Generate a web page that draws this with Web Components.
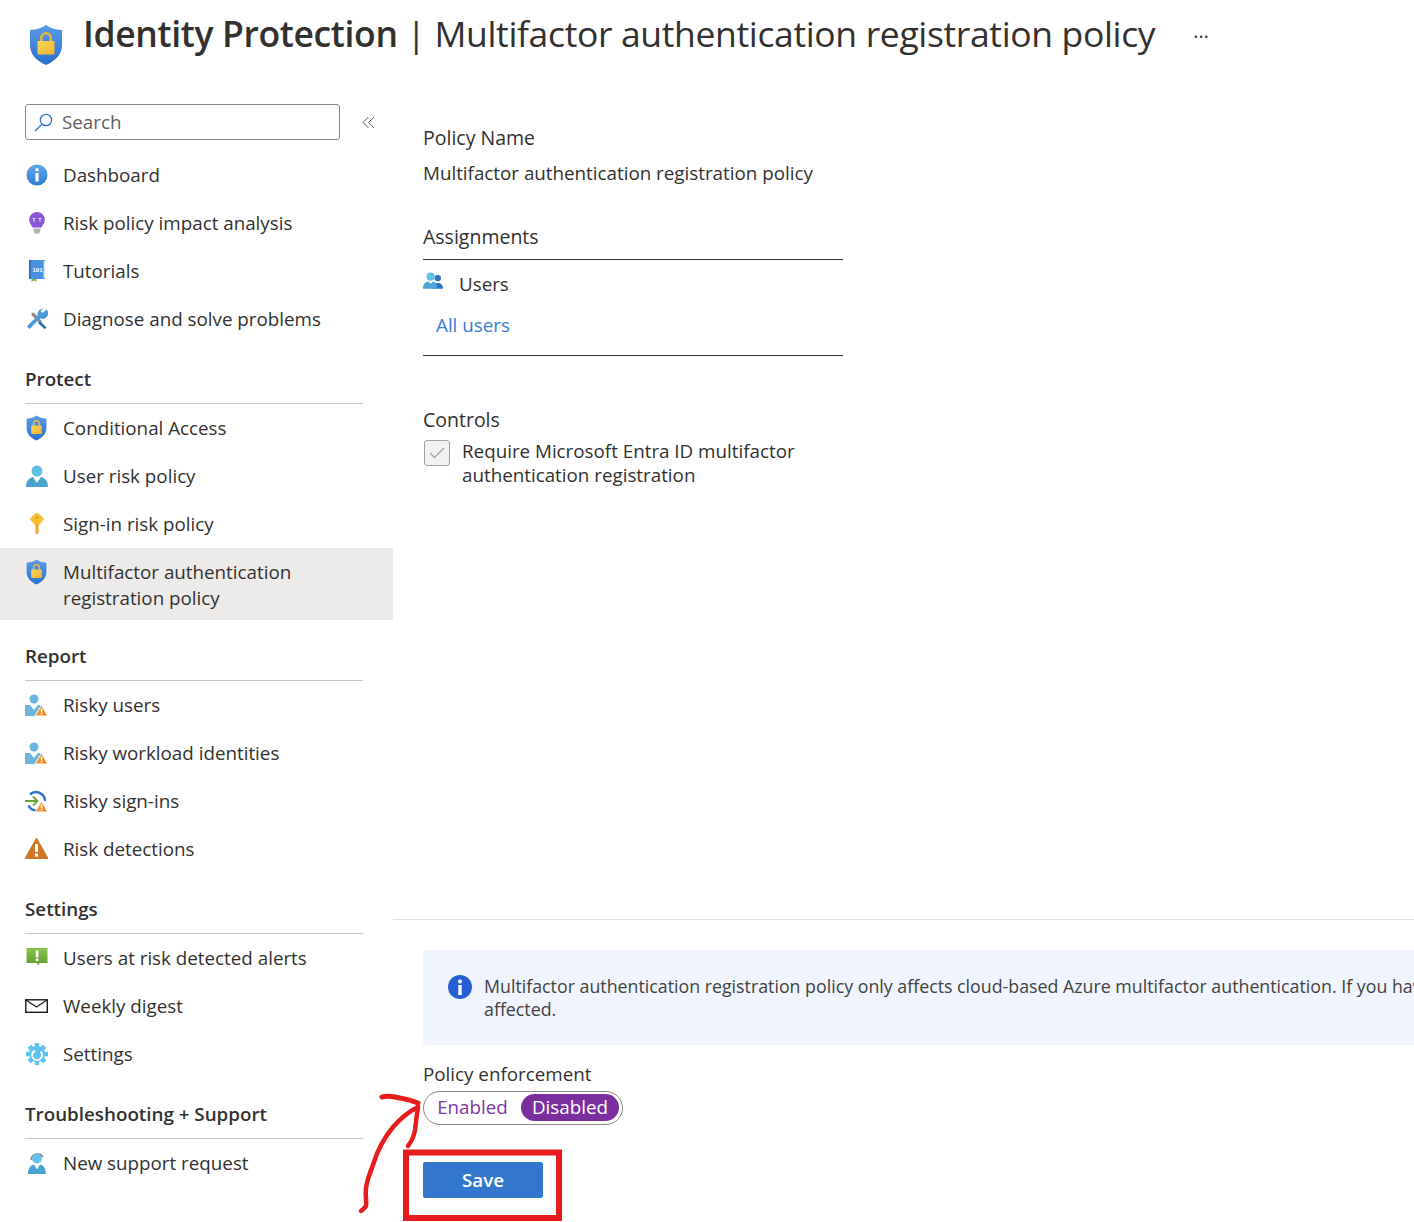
<!DOCTYPE html>
<html lang="en">
<head>
<meta charset="utf-8">
<title>Identity Protection</title>
<style>
    html, body { margin: 0; padding: 0; height: 1222px; overflow: hidden; background: white; }
    body { font-family: "Open Sans", "Noto Sans", sans-serif; color: #323130; }
</style>
</head>
<body>
<ip-app>
    <ip-header slot="header" first="Identity Protection" second="Multifactor authentication registration policy"></ip-header>
    <ip-nav slot="nav">
        <ip-nav-item icon="info">Dashboard</ip-nav-item>
        <ip-nav-item icon="bulb">Risk policy impact analysis</ip-nav-item>
        <ip-nav-item icon="book">Tutorials</ip-nav-item>
        <ip-nav-item icon="tools">Diagnose and solve problems</ip-nav-item>
        <ip-nav-heading>Protect</ip-nav-heading>
        <ip-nav-item icon="shield">Conditional Access</ip-nav-item>
        <ip-nav-item icon="user">User risk policy</ip-nav-item>
        <ip-nav-item icon="key">Sign-in risk policy</ip-nav-item>
        <ip-nav-item icon="shield" selected>Multifactor authentication registration policy</ip-nav-item>
        <ip-nav-heading>Report</ip-nav-heading>
        <ip-nav-item icon="riskyuser">Risky users</ip-nav-item>
        <ip-nav-item icon="riskyuser">Risky workload identities</ip-nav-item>
        <ip-nav-item icon="signin">Risky sign-ins</ip-nav-item>
        <ip-nav-item icon="warning">Risk detections</ip-nav-item>
        <ip-nav-heading>Settings</ip-nav-heading>
        <ip-nav-item icon="alert">Users at risk detected alerts</ip-nav-item>
        <ip-nav-item icon="mail">Weekly digest</ip-nav-item>
        <ip-nav-item icon="gear">Settings</ip-nav-item>
        <ip-nav-heading>Troubleshooting + Support</ip-nav-heading>
        <ip-nav-item icon="support">New support request</ip-nav-item>
    </ip-nav>
    <ip-policy-form slot="main"></ip-policy-form>
    <ip-policy-footer slot="footer"></ip-policy-footer>
    <ip-annotation></ip-annotation>
</ip-app>

<script>
(() => {
    const SHIELD = `
        <svg viewBox="0 0 36 42" width="100%" height="100%">
            <defs><linearGradient id="s" x1="0" y1="0" x2="0" y2="1"><stop offset="0" stop-color="#5b9be6"/><stop offset="1" stop-color="#2a6fd0"/></linearGradient>
            <linearGradient id="l" x1="0" y1="0" x2="1" y2="1"><stop offset="0" stop-color="#f9d65c"/><stop offset="1" stop-color="#f0b429"/></linearGradient></defs>
            <path d="M18 1c4 3 9 4.500 16 5v15c0 10-7 16-16 20C9 37 2 31 2 21V6c7-.5 12-2 16-5z" fill="url(#s)"/>
            <path d="M12 18v-4a6 6 0 0 1 12 0v4h-2.500v-4a3.500 3.500 0 0 0-7 0v4z" fill="#e8b63a"/>
            <rect x="9.500" y="17" width="17" height="13.500" rx="1" fill="url(#l)"/>
        </svg>`

    const PERSON = `
        <circle cx="11" cy="6" r="5.500" fill="#5fc0e6"/>
        <path d="M0 22c0-6 3-9 7-10l4 6 4-6c4 1 7 4 7 10z" fill="#4aa3cf"/>
        <path d="M9.500 12h3L11 15.500z" fill="#fff"/>`

    const RISK_BADGE = `
        <path d="M16.500 11L23 22H10z" fill="#f0913a" stroke="#fff" stroke-width="1"/>
        <rect x="15.800" y="14.500" width="1.400" height="3.800" fill="#fff"/>
        <rect x="15.800" y="19" width="1.400" height="1.400" fill="#fff"/>`

    const ICONS = {
        shield: SHIELD,
        info: `<svg viewBox="0 0 22 22" width="22" height="22">
            <defs><linearGradient id="g" x1="0" y1="0" x2="0" y2="1"><stop offset="0" stop-color="#5ea7ec"/><stop offset="1" stop-color="#2f7fd3"/></linearGradient></defs>
            <circle cx="11" cy="11" r="10.500" fill="url(#g)"/><circle cx="11" cy="5.800" r="1.800" fill="#fff"/><rect x="9.400" y="9" width="3.200" height="8.500" fill="#fff"/></svg>`,
        bulb: `<svg viewBox="0 0 22 22" width="22" height="22">
            <path d="M11 0a7.800 7.800 0 0 0-7.800 8c0 3.200 2.300 5 3.300 7.500h9c1-2.500 3.300-4.300 3.300-7.500A7.800 7.800 0 0 0 11 0z" fill="#8a56d8"/>
            <path d="M8 10V6M14 10V6M6.500 6.500h3M12.500 6.500h3" stroke="#e3d6f7" stroke-width="1" fill="none"/>
            <path d="M7.500 16.500h7v2.500l-1.500 2.500H9L7.500 19z" fill="#b3b1af"/></svg>`,
        book: `<svg viewBox="0 0 22 22" width="22" height="22">
            <rect x="3" y="0" width="16" height="19" fill="#4a90e2"/><rect x="17.500" y="1" width="1.500" height="17" fill="#d7e6f7"/>
            <rect x="3" y="0" width="2" height="19" fill="#2f72c4"/>
            <text x="11.500" y="11.500" font-size="6" font-weight="700" fill="#fff" text-anchor="middle" font-family="Liberation Sans, sans-serif">101</text>
            <path d="M5.500 19h5v3l-2.500-1.500L5.500 22z" fill="#7fba42"/></svg>`,
        tools: `<svg viewBox="0 0 22 22" width="22" height="22">
            <path d="M2 1l3 0 10 11-2.500 2.500L2 4z" fill="#8a8886" transform="translate(4 4) scale(.8)"/>
            <path d="M14 13l6.500 6.500-1.800 1.800L12 15z" fill="#1f6fb5"/>
            <path d="M20.500 1.500l-3.500 3.200-1.800-.4-.4-1.800L18.200.8a5.500 5.500 0 0 0-6.500 7L.8 18.200l2.800 2.800L14.200 10.300a5.500 5.500 0 0 0 6.300-8.800z" fill="#4a9bd8" transform="translate(0 0)"/></svg>`,
        user: `<svg viewBox="0 0 22 22" width="22" height="22">${PERSON}</svg>`,
        key: `<svg viewBox="0 0 22 22" width="22" height="22">
            <path d="M11 0l6.500 6-6.500 7-6.500-7z" fill="#f7c335" stroke="#f7c335" stroke-width="1.500" stroke-linejoin="round"/>
            <circle cx="11" cy="4.500" r="1.300" fill="#d89a1f"/>
            <path d="M9.500 11h3v9l-1.500 1.800L9.500 20z" fill="#f2a52a"/></svg>`,
        riskyuser: `<svg viewBox="0 0 23 23" width="23" height="23">
            <circle cx="9" cy="5" r="4.500" fill="#6db5dc"/>
            <path d="M0 11h5l4 5 4-5h3v11H0z" fill="#6db5dc"/>${RISK_BADGE}</svg>`,
        signin: `<svg viewBox="0 0 23 23" width="23" height="23">
            <path d="M5 4.500a9 9 0 0 1 15 6.500M3.500 15.500a9 9 0 0 0 8.500 5" fill="none" stroke="#2b74c9" stroke-width="2.500"/>
            <path d="M0 11h12M8 6.500l4.500 4.500L8 15.500" fill="none" stroke="#6aa634" stroke-width="1.800"/>${RISK_BADGE}</svg>`,
        warning: `<svg viewBox="0 0 23 22" width="23" height="22">
            <path d="M11.500 0L23 20.500H0z" fill="#cf7729" stroke="#cf7729" stroke-linejoin="round"/>
            <rect x="10" y="6" width="3" height="8" fill="#fff"/><rect x="10" y="15.500" width="3" height="3" fill="#fff"/></svg>`,
        alert: `<svg viewBox="0 0 22 22" width="22" height="22">
            <defs><linearGradient id="a" x1="0" y1="0" x2="0" y2="1"><stop offset="0" stop-color="#8bc34a"/><stop offset="1" stop-color="#5e9c2e"/></linearGradient></defs>
            <path d="M.5 1h21v15h-8l-1.500 2.500-1-2.500H.5z" fill="url(#a)"/>
            <rect x="9.800" y="3.500" width="2.600" height="7" fill="#fff"/><rect x="9.800" y="11.500" width="2.600" height="2.600" fill="#fff"/></svg>`,
        mail: `<svg viewBox="0 0 23 16" width="23" height="16">
            <rect x=".8" y="1.800" width="21.500" height="12.500" fill="#fff" stroke="#1b1a19" stroke-width="1.400"/>
            <path d="M1 2l10.500 7L22 2" fill="none" stroke="#1b1a19" stroke-width="1.200"/></svg>`,
        gear: `<svg viewBox="0 0 22 22" width="22" height="22">
            <g fill="#5ec4ee"><circle cx="11" cy="11" r="8"/>
            <rect x="8.800" y="0" width="4.400" height="22" rx=".5"/><rect x="8.800" y="0" width="4.400" height="22" rx=".5" transform="rotate(45 11 11)"/>
            <rect x="8.800" y="0" width="4.400" height="22" rx=".5" transform="rotate(90 11 11)"/><rect x="8.800" y="0" width="4.400" height="22" rx=".5" transform="rotate(135 11 11)"/></g>
            <path d="M7.500 8.500a5 5 0 1 0 7 0" fill="none" stroke="#fff" stroke-width="1.800"/><path d="M7.500 6.500l2.500 2.500-3.200.8z" fill="#fff"/></svg>`,
        support: `<svg viewBox="0 0 22 22" width="22" height="22">
            <path d="M5 8a6.500 6.500 0 0 1 12-3" fill="none" stroke="#797775" stroke-width="1.200"/>
            <circle cx="11" cy="6.500" r="5" fill="#63c1e8"/>
            <path d="M2 22c0-6 2.500-8.500 6-9.500l3 5 3-5c3.500 1 6 3.500 6 9.500z" fill="#49a5d3"/>
            <path d="M9.500 12.500h3L11 15z" fill="#fff"/></svg>`,
        users: `<svg viewBox="0 0 22 18" width="22" height="18">
            <circle cx="15.500" cy="6" r="3.300" fill="#2f6fc6"/><path d="M10 17c0-4 2.500-6 5.500-6s5.500 2 5.500 6z" fill="#2f6fc6"/>
            <circle cx="8" cy="4.500" r="4.300" fill="#63c1e8"/><path d="M0 17c0-5 2.500-7 5.500-7.500L8 12l2.500-2.500c3 .5 4.500 2.500 4.500 7.500z" fill="#49a5d3"/></svg>`
    }

    customElements.define("ip-icon", class extends HTMLElement {
        constructor(){
            super()
            this.root = this.attachShadow({mode: 'open'})
        }
        connectedCallback(){
            this.root.innerHTML = `
                <style>
                    :host { display: flex; width: 100%; height: 100%; justify-content: center; align-items: center; }
                    svg { display: block; }
                </style>
                ${ICONS[this.getAttribute("name")] || ""}`
        }
    })

    customElements.define("ip-app", class extends HTMLElement {
        constructor(){
            super()
            this.attachShadow({mode: 'open'}).innerHTML = `
                <style>
                    :host { display: block; position: relative; width: 1414px; height: 1222px; overflow: hidden; }
                    .body { display: grid; grid-template-columns: 393px 1fr; height: 1118px; }
                    .right { display: flex; flex-direction: column; min-width: 0; }
                    .main { height: 815px; border-bottom: 1px solid #e1dfdd; }
                </style>
                <slot name="header"></slot>
                <div class="body">
                    <slot name="nav"></slot>
                    <div class="right">
                        <div class="main"><slot name="main"></slot></div>
                        <slot name="footer"></slot>
                    </div>
                </div>
                <slot></slot>`
        }
    })

    customElements.define("ip-header", class extends HTMLElement {
        constructor(){
            super()
            this.attachShadow({mode: 'open'})
        }
        connectedCallback(){
            this.shadowRoot.innerHTML = `
                <style>
                    :host { display: flex; height: 104px; box-sizing: border-box; padding: 0 0 0 28px; }
                    .logo { width: 36px; height: 42px; margin-top: 24px; flex: none; }
                    h1 { margin: 10px 0 0 19px; font-size: 35.500px; line-height: 46px; font-weight: 400; white-space: nowrap; letter-spacing: -.35px; }
                    b { font-weight: 600; }
                    .more { margin: 8px 0 0 38px; font-size: 20px; line-height: 46px; letter-spacing: 1px; height: 30px; color: #323130; }
                </style>
                <div class="logo"><ip-icon name="shield"></ip-icon></div>
                <h1><b>${this.getAttribute("first")}</b> | ${this.getAttribute("second")}</h1>
                <div class="more">…</div>`
        }
    })

    customElements.define("ip-nav", class extends HTMLElement {
        constructor(){
            super()
            this.attachShadow({mode: 'open'}).innerHTML = `
                <style>
                    :host { display: block; }
                    .top { display: flex; align-items: center; padding: 0 18px 0 25px; margin-bottom: 11px; }
                    .search { flex: none; width: 315px; height: 36px; box-sizing: border-box; border: 1px solid #8a8886; border-radius: 3px;
                        display: flex; align-items: center; gap: 9px; padding-left: 8px; color: #605e5c; font-size: 18.800px; }
                    svg { display: block; flex: none; }
                    .collapse { margin-left: 22px; }
                </style>
                <div class="top">
                    <div class="search">
                        <svg width="19" height="19" viewBox="0 0 19 19" fill="none" stroke="#2b74c9" stroke-width="1.300"><circle cx="12" cy="7" r="5.700"/><path d="M8 11.200L1 18"/></svg>
                        <span>Search</span>
                    </div>
                    <svg class="collapse" width="13" height="13" viewBox="0 0 13 13" fill="none" stroke="#605e5c" stroke-width="1"><path d="M6.500 1L1 6.500 6.500 12M12 1L6.500 6.500 12 12"/></svg>
                </div>
                <slot></slot>`
        }
    })

    customElements.define("ip-nav-heading", class extends HTMLElement {
        constructor(){
            super()
            this.attachShadow({mode: 'open'}).innerHTML = `
                <style>
                    :host { display: block; box-sizing: border-box; height: 61px; padding: 22px 30px 0 25px; }
                    div { height: 38px; line-height: 28px; border-bottom: 1px solid #c8c6c4; font-size: 18.800px; font-weight: 600; white-space: nowrap; }
                </style>
                <div><slot></slot></div>`
        }
    })

    customElements.define("ip-nav-item", class extends HTMLElement {
        constructor(){
            super()
            this.attachShadow({mode: 'open'})
        }
        connectedCallback(){
            this.shadowRoot.innerHTML = `
                <style>
                    :host { display: grid; grid-template-columns: 23px 1fr; column-gap: 15px; box-sizing: border-box; min-height: 48px; padding: 11px 30px 11px 25px; font-size: 18.800px; line-height: 26px; }
                    :host([selected]) { background: #edebe9; padding-bottom: 9px; }
                    .icon { height: 26px; }
                </style>
                <div class="icon"><ip-icon name="${this.getAttribute("icon")}"></ip-icon></div>
                <div><slot></slot></div>`
        }
    })

    customElements.define("ip-checkbox", class extends HTMLElement {
        constructor(){
            super()
            this.attachShadow({mode: 'open'}).innerHTML = `
                <style>
                    :host { display: flex; gap: 12px; line-height: 24px; }
                    .box { flex: none; width: 26px; height: 26px; margin: 1px 0 0 1px; box-sizing: border-box; border: 1px solid #a19f9d; border-radius: 3px; background: #f3f2f1;
                        display: flex; align-items: center; justify-content: center; }
                </style>
                <div class="box"><svg width="16" height="12" viewBox="0 0 16 12" fill="none" stroke="#a19f9d" stroke-width="1.200"><path d="M1 6l4.500 4.500L15 1"/></svg></div>
                <div><slot></slot></div>`
        }
    })

    customElements.define("ip-policy-form", class extends HTMLElement {
        constructor(){
            super()
            this.attachShadow({mode: 'open'}).innerHTML = `
                <style>
                    :host { display: block; padding: 21px 0 0 30px; font-size: 18.800px; line-height: 26px; white-space: nowrap; }
                    .name { margin-top: 9px; }
                    .section { width: 420px; margin-top: 38px; }
                    .section h2 { font: inherit; font-size: 19.500px; margin: 0; padding-bottom: 9px; border-bottom: 1px solid #323130; }
                    .users { display: flex; align-items: center; gap: 15px; padding-top: 11px; height: 26px; }
                    .users ip-icon { width: 21px; height: 18px; margin-top: -6px; }
                    a { display: block; color: #3a7ad3; text-decoration: none; padding: 15px 0 17px 13px; border-bottom: 1px solid #323130; }
                    h2.plain { font: inherit; font-size: 19.500px; margin: 51px 0 6px; }
                    ip-checkbox { width: 420px; white-space: normal; }
                </style>
                <div style="font-size:19.500px">Policy Name</div>
                <div class="name">Multifactor authentication registration policy</div>
                <div class="section">
                    <h2>Assignments</h2>
                    <div class="users"><ip-icon name="users"></ip-icon><span>Users</span></div>
                    <a href="#">All users</a>
                </div>
                <h2 class="plain">Controls</h2>
                <ip-checkbox>Require Microsoft Entra ID multifactor authentication registration</ip-checkbox>`
        }
    })

    customElements.define("ip-info-bar", class extends HTMLElement {
        constructor(){
            super()
            this.attachShadow({mode: 'open'}).innerHTML = `
                <style>
                    :host { display: flex; gap: 12px; box-sizing: border-box; height: 95px; padding: 25px 0 0 25px; background: #f0f5fd; border-radius: 3px 0 0 3px; white-space: nowrap; overflow: hidden; font-size: 17.800px; line-height: 23px; color: #424242; }
                    svg { flex: none; }
                </style>
                <svg width="24" height="24" viewBox="0 0 24 24"><circle cx="12" cy="12" r="12" fill="#2460d4"/><circle cx="12" cy="6.500" r="2" fill="#fff"/><rect x="10.300" y="10" width="3.400" height="10" fill="#fff"/></svg>
                <div><slot></slot></div>`
        }
    })

    customElements.define("ip-toggle", class extends HTMLElement {
        constructor(){
            super()
            this.attachShadow({mode: 'open'}).innerHTML = `
                <style>
                    :host { display: flex; width: 200px; height: 34px; box-sizing: border-box; padding: 2px 3px 3px 0; border: 1px solid #8a8886; border-radius: 17px; font-size: 18.800px; line-height: 27px; }
                    span { display: block; text-align: center; }
                    .off { width: 97px; color: #7f35a5; }
                    .on { width: 98px; margin-left: auto; background: #7b2f9e; color: white; border-radius: 14px; }
                </style>
                <span class="off">Enabled</span><span class="on">Disabled</span>`
        }
    })

    customElements.define("ip-button", class extends HTMLElement {
        constructor(){
            super()
            this.attachShadow({mode: 'open'}).innerHTML = `
                <style>
                    :host { display: block; width: 120px; height: 36px; background: #3277cc; color: white; border-radius: 2px; text-align: center; font-size: 18.800px; font-weight: 600; line-height: 36px; }
                </style>
                <slot></slot>`
        }
    })

    customElements.define("ip-policy-footer", class extends HTMLElement {
        constructor(){
            super()
            this.attachShadow({mode: 'open'}).innerHTML = `
                <style>
                    :host { display: block; padding: 30px 0 0 30px; font-size: 18.800px; }
                    .label { margin: 16px 0 4px; line-height: 26px; }
                    ip-button { margin-top: 37px; }
                </style>
                <ip-info-bar>Multifactor authentication registration policy only affects cloud-based Azure multifactor authentication. If you have m<br>affected.</ip-info-bar>
                <div class="label">Policy enforcement</div>
                <ip-toggle></ip-toggle>
                <ip-button>Save</ip-button>`
        }
    })

    // les annotations rouges dessinées à la main par-dessus la capture
    customElements.define("ip-annotation", class extends HTMLElement {
        constructor(){
            super()
            this.attachShadow({mode: 'open'}).innerHTML = `
                <style>
                    :host { position: absolute; inset: 0; pointer-events: none; }
                    svg { display: block; }
                </style>
                <svg width="1414" height="1222" viewBox="0 0 1414 1222" fill="none" stroke="#e81c1c" stroke-linecap="round" stroke-linejoin="round">
                    <rect x="406" y="1152.500" width="153" height="65.500" stroke-width="6" stroke-linecap="butt" stroke-linejoin="miter"/>
                    <path stroke-width="5" d="M382 1097c6-2 12 0 18 1 7 1 13 3 18 5"/>
                    <path stroke-width="4.500" d="M418 1107c-8 4-18 12-25 20-8 10-15 22-19 35-3 9-7 17-8 26-1 8 1 14 0 18-1 2-3 3-5 5"/>
                    <path stroke-width="4.500" d="M418 1106c-1 8-2 16-3 24-1 6-4 12-7 16"/>
                </svg>`
        }
    })
})()
</script>
</body>
</html>
